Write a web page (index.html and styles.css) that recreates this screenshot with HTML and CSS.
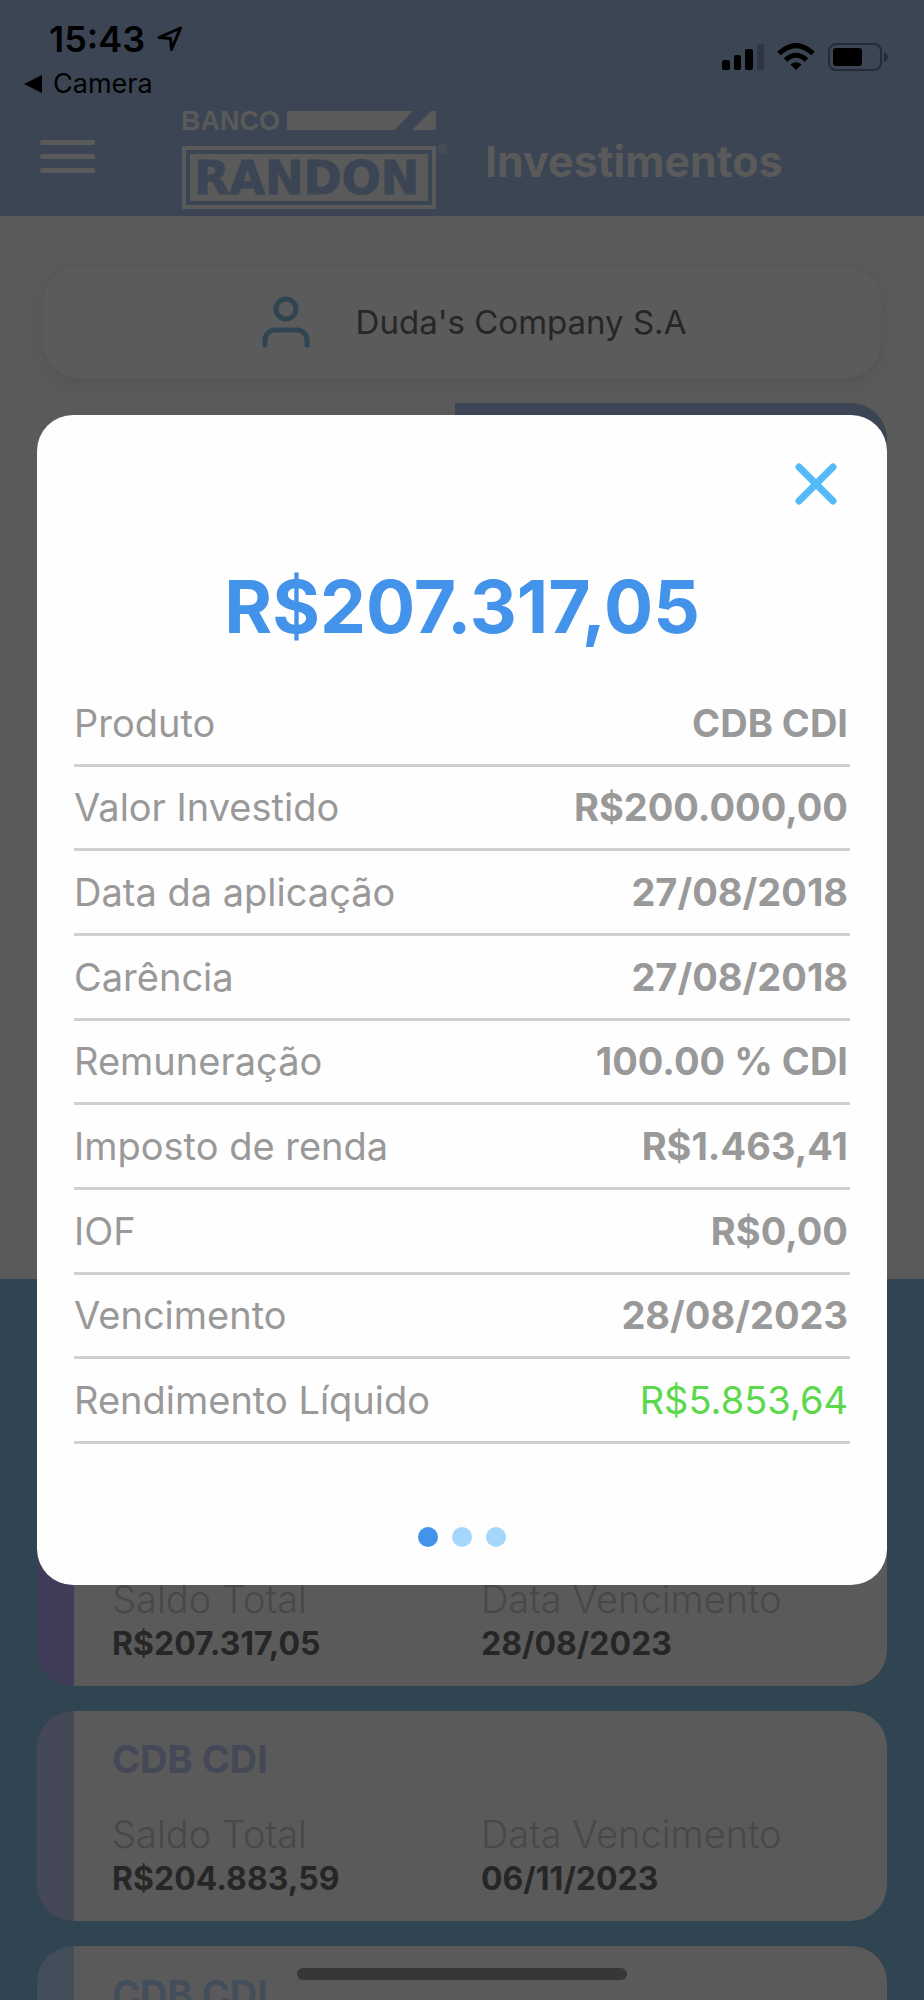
FILE: index.html
```html
<!DOCTYPE html>
<html lang="pt-BR">
<head>
<meta charset="utf-8">
<meta name="viewport" content="width=device-width, initial-scale=1">
<title>Investimentos</title>
<link rel="stylesheet" href="styles.css">
</head>
<body>
<div class="app">
  <header class="header">
    <div class="status">
      <div class="status-left">
        <div class="clock">
          <span>15:43</span>
          <svg width="26" height="26" viewBox="0 0 26 26" aria-hidden="true"><path d="M2 11.500 23.500 2 14.500 23.500 13.500 12.500Z" fill="none" stroke="currentColor" stroke-width="3" stroke-linejoin="round"/></svg>
        </div>
        <a class="back" href="#">
          <svg width="18" height="18" viewBox="0 0 18 18" aria-hidden="true"><path d="M0 9 18 0V18Z" fill="currentColor"/></svg>
          Camera
        </a>
      </div>
      <div class="status-right">
        <svg width="42" height="28" viewBox="0 0 42 28" aria-hidden="true"><rect y="17" width="8" height="10" rx="2"/><rect x="12" y="12" width="7" height="15" rx="2"/><rect x="23" y="6" width="8" height="21" rx="2"/><rect x="35" y="1" width="7" height="26" rx="2" fill="#2f3643"/></svg>
        <svg width="38" height="28" viewBox="0 0 38 28" aria-hidden="true"><g fill="none" stroke="#000" stroke-width="5"><path d="M2 10.500Q19-5.500 36 10.500"/><path d="M8.500 17Q19 7.500 29.500 17"/></g><path d="M13.500 21.500Q19 17 24.500 21.500L19 27Z"/></svg>
        <svg width="60" height="28" viewBox="0 0 60 28" aria-hidden="true"><rect x="1" y="1" width="52" height="26" rx="7" fill="none" stroke="#252b35" stroke-width="2"/><rect x="5" y="5" width="29" height="18" rx="3"/><path d="M56 9Q60 11 60 14T56 19Z" fill="#252b35"/></svg>
      </div>
    </div>
    <div class="nav">
      <button class="menu" aria-label="Menu"><span></span><span></span><span></span></button>
      <svg class="logo" width="268" height="100" viewBox="0 0 268 100" role="img" aria-label="Banco Randon">
        <text class="logo-banco" x="-1" y="19">BANCO</text>
        <path class="logo-fill" d="M105 0H231L213 19H105ZM254 0V19H230L249 0Z"/>
        <rect class="logo-fill" y="35" width="254" height="63"/>
        <rect class="logo-line" x="6" y="41" width="242" height="51"/>
        <text class="logo-randon" x="12" y="83">RANDON</text>
        <text class="logo-reg" x="256" y="43">®</text>
      </svg>
      <h1 class="title">Investimentos</h1>
    </div>
  </header>
  <main class="main">
    <button class="company">
      <svg width="48" height="52" viewBox="0 0 48 52" fill="none" stroke="currentColor" stroke-width="5" stroke-linecap="round" aria-hidden="true"><circle cx="24" cy="13" r="10"/><path d="M3 49V44A10 10 0 0 1 13 34H35A10 10 0 0 1 45 44V49"/></svg>
      <span>Duda's Company S.A</span>
    </button>
    <div class="tabs"><div class="tab-active"></div></div>
  </main>
  <section class="list">
    <article class="card violet">
      <h2 class="card-name">CDB CDI</h2>
      <dl class="card-data">
        <div><dt>Saldo Total</dt><dd>R$207.317,05</dd></div>
        <div><dt>Data Vencimento</dt><dd>28/08/2023</dd></div>
      </dl>
    </article>
    <article class="card slate">
      <h2 class="card-name">CDB CDI</h2>
      <dl class="card-data">
        <div><dt>Saldo Total</dt><dd>R$204.883,59</dd></div>
        <div><dt>Data Vencimento</dt><dd>06/11/2023</dd></div>
      </dl>
    </article>
    <article class="card steel">
      <h2 class="card-name">CDB CDI</h2>
    </article>
  </section>

  <div class="modal" role="dialog" aria-modal="true" aria-labelledby="amount">
    <button class="close" aria-label="Fechar">
      <svg width="42" height="42" viewBox="0 0 42 42" aria-hidden="true"><path d="M4 4 38 38M38 4 4 38" stroke="currentColor" stroke-width="7" stroke-linecap="round"/></svg>
    </button>
    <h2 class="amount" id="amount">R$207.317,05</h2>
    <table class="details">
      <tr><th scope="row">Produto</th><td>CDB CDI</td></tr>
      <tr><th scope="row">Valor Investido</th><td>R$200.000,00</td></tr>
      <tr><th scope="row">Data da aplicação</th><td>27/08/2018</td></tr>
      <tr><th scope="row">Carência</th><td>27/08/2018</td></tr>
      <tr><th scope="row">Remuneração</th><td>100.00 % CDI</td></tr>
      <tr><th scope="row">Imposto de renda</th><td>R$1.463,41</td></tr>
      <tr><th scope="row">IOF</th><td>R$0,00</td></tr>
      <tr><th scope="row">Vencimento</th><td>28/08/2023</td></tr>
      <tr><th scope="row">Rendimento Líquido</th><td class="gain">R$5.853,64</td></tr>
    </table>
    <div class="dots">
      <button class="dot current" aria-label="Página 1"></button>
      <button class="dot" aria-label="Página 2"></button>
      <button class="dot" aria-label="Página 3"></button>
    </div>
  </div>
  <div class="home-bar"></div>
</div>
</body>
</html>
```
FILE: styles.css
```css
* { box-sizing: border-box; }
body, h1, h2, dl, dd { margin: 0; }
body { font-family: Inter, "Liberation Sans", sans-serif; }
button { border: 0; padding: 0; background: none; font: inherit; }

.app {
  position: relative;
  height: 100vh;
  overflow: hidden;
  display: flex;
  flex-direction: column;
  background: #5a5a5a;
}
.header, .main, .list { flex-shrink: 0; }

.header { background: #3c4553; padding-bottom: 5px; }
.status {
  display: flex;
  justify-content: space-between;
  height: 111px;
  padding: 18px 36px 0 24px;
}
.clock {
  display: flex;
  align-items: center;
  gap: 12px;
  padding-left: 25px;
  font-size: 36px;
  font-weight: 600;
  line-height: 42px;
}
.back {
  display: flex;
  align-items: center;
  gap: 11px;
  margin-top: 8px;
  color: #000;
  font-size: 27px;
  line-height: 32px;
  text-decoration: none;
}
.status-right {
  display: flex;
  align-items: flex-start;
  gap: 13px;
  padding-top: 25px;
}
.nav {
  display: flex;
  align-items: center;
  height: 100px;
  padding-left: 40px;
}
.menu {
  display: flex;
  flex-direction: column;
  gap: 9px;
  width: 55px;
  margin-right: 87px;
  padding-bottom: 10px;
}
.menu span { height: 5px; border-radius: 3px; background: #5a5a5a; }
.logo { margin-right: 35px; overflow: visible; }
.logo-banco { font: bold 27px "Liberation Sans", sans-serif; fill: #5a5a5a; }
.logo-fill { fill: #5a5a5a; }
.logo-line { fill: none; stroke: #3c4553; stroke-width: 4px; }
.logo-randon {
  font: bold 46px "DejaVu Sans", sans-serif;
  fill: #3c4553;
  stroke: #3c4553;
  stroke-width: 1px;
}
.logo-reg { font: 12px "Liberation Sans", sans-serif; fill: #5a5a5a; }
.title { color: #5a5a5a; font-size: 43px; font-weight: 700; line-height: 52px; }

.main { height: 1063px; padding: 50px 37px 0; }
.company {
  display: flex;
  align-items: center;
  justify-content: center;
  gap: 46px;
  width: calc(100% - 12px);
  height: 112px;
  margin: 0 6px 25px;
  padding: 0 0 1px 24px;
  border-radius: 36px;
  background: #5b5b5b;
  box-shadow: 0 0 1px 1px #575757, 0 6px 10px #555;
  color: #304452;
  font-size: 33px;
}
.company span { color: #262626; }
.tabs { display: grid; grid-template-columns: 418px 1fr; }
.tab-active { grid-column: 2; height: 110px; border-radius: 0 36px 0 0; background: #3c4553; }

.list {
  display: flex;
  flex-direction: column;
  gap: 25px;
  padding: 197px 37px 25px;
  background: #304452;
}
.card {
  height: 210px;
  padding: 24px 37px 0 38px;
  border-left: 37px solid;
  border-radius: 36px;
  background: #5a5a5a;
}
.violet { border-color: #3f3d57; }
.slate { border-color: #454856; }
.steel { border-color: #434e5b; }
.card-name { font-size: 38px; font-weight: 700; line-height: 48px; }
.violet .card-name { color: #3f3d57; }
.slate .card-name { color: #454856; }
.steel .card-name { color: #434e5b; }
.card-data { display: grid; grid-template-columns: 369px 1fr; margin-top: 28px; }
.card-data dt { color: #484848; font-size: 38px; font-weight: 300; line-height: 46px; }
.card-data dd { margin-top: 2px; color: #262626; font-size: 32px; font-weight: 700; line-height: 40px; }

.modal {
  position: absolute;
  top: 415px;
  left: 37px;
  right: 37px;
  display: flex;
  flex-direction: column;
  padding: 48px 37px 38px;
  border-radius: 36px;
  background: #fefefe;
}
.close { align-self: flex-end; width: 42px; height: 42px; margin-right: 13px; color: #54bbfb; }
.close svg { display: block; }
.amount {
  margin-top: 58px;
  color: #4293e9;
  font-size: 73px;
  font-weight: 700;
  line-height: 88px;
  text-align: center;
}
.details {
  width: 100%;
  height: 761px;
  margin-top: 32px;
  border-collapse: collapse;
  color: #999;
  font-size: 38px;
  line-height: 46px;
}
.details th, .details td { padding: 0 2px; border-bottom: 3px solid #d0d0d0; }
.details th { padding-left: 0; font-weight: 400; text-align: left; }
.details td { font-weight: 700; text-align: right; }
.details .gain { color: #5bd84b; font-weight: 400; }
.dots { display: flex; justify-content: center; gap: 14px; margin-top: 83px; }
.dot { width: 20px; height: 20px; border-radius: 50%; background: #a5d7fd; }
.dot.current { background: #4293e9; }

.home-bar {
  position: absolute;
  bottom: 20px;
  left: 50%;
  width: 330px;
  height: 12px;
  margin-left: -165px;
  border-radius: 6px;
  background: #373737;
}
```
